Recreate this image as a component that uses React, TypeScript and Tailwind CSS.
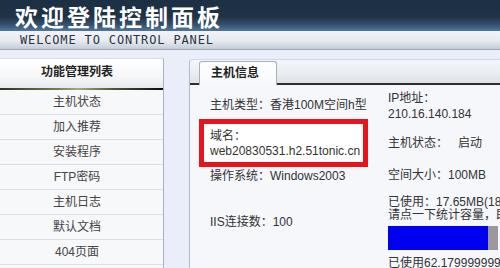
export default function App() {
  const cjk = { fontFamily: '"Liberation Sans", "Noto Sans CJK SC", sans-serif' } as const;
  const items = ["主机状态", "加入推荐", "安装程序", "FTP密码", "主机日志", "默认文档", "404页面"];
  return (
    <div className="w-[500px] h-[268px] overflow-hidden bg-[#e9eef8] text-[12px] text-[#333]" style={cjk}>
      {/* header */}
      <div className="h-[31px] flex items-center pl-[15px] bg-[linear-gradient(to_bottom,#1c2f43_0%,#1f3347_55%,#33536f_80%,#5077a0_100%)]">
        <span className="text-white text-[23px] font-bold tracking-[3px] leading-[28px]" style={{ fontFamily: '"Noto Sans CJK SC", sans-serif' }}>
          欢迎登陆控制面板
        </span>
      </div>
      <div className="h-[19px] flex items-center pl-[20px] border-b border-[#9ea7b3] bg-[linear-gradient(to_bottom,#f1f3f7_0%,#e7eaf0_55%,#c6cdd7_100%)]">
        <span className="text-[12px] text-[#2b3440] tracking-[0.85px] leading-none" style={{ fontFamily: '"DejaVu Sans Mono", monospace' }}>
          WELCOME TO CONTROL PANEL
        </span>
      </div>
      {/* main */}
      <div className="flex items-start">
        {/* sidebar */}
        <div className="mt-[8px] w-[164px] shrink-0 border-r border-t border-r-[#aab3bd] border-t-[#d6dbe2] bg-[#f7f8fa] pb-[10px]">
          <div className="h-[29px] flex items-center justify-center pr-[9px] pb-[3px] font-bold text-[#222] bg-[linear-gradient(to_bottom,#ffffff_0%,#f6f7f9_60%,#e6e9ee_100%)]">
            功能管理列表
          </div>
          <div className="h-[2px] bg-[linear-gradient(to_right,#2b3322_0%,#6f8050_35%,#9fae7a_48%,#4a5535_70%,#0c0c0c_100%)]" />
          {items.map((t) => (
            <div key={t} className="h-[25px] flex items-center justify-center pr-[9px] border-b border-[#dcdfe4] text-[#444]">
              {t}
            </div>
          ))}
        </div>
        {/* panel */}
        <div className="ml-[25px] mt-[9px] flex-1 min-w-0 border-l border-t border-l-[#b2bac4] border-t-[#d3d9e0] rounded-tl-[4px] bg-[#f5f7fb]">
          <div className="h-[25px] flex items-end border-b-2 border-[#2e2e2e] bg-[linear-gradient(to_bottom,#f4f6f9_0%,#e9ecf1_60%,#dde2e9_100%)] rounded-tl-[4px]">
            <div className="ml-[9px] -mb-[2px] w-[78px] h-[24px] flex items-center justify-center pb-[2px] font-bold text-[#222] border border-b-0 border-[#a7afb9] rounded-t-[3px] bg-[linear-gradient(to_bottom,#ffffff_0%,#f7f8fa_100%)]">
              <span className="pr-[6px]">主机信息</span>
            </div>
          </div>
          <div className="flex whitespace-nowrap">
            {/* left column */}
            <div className="w-[198px] shrink-0 pl-[20px] flex flex-col leading-[16px]">
              <div className="mt-[12px]">主机类型：香港100M空间h型</div>
              <div className="mt-[6px] -ml-[11px] w-[169px] border-[5px] border-[#e8141b] bg-white pl-[6px] pt-[5px] pb-[3px] leading-[15px]">
                <div>域名：</div>
                <div>web20830531.h2.51tonic.cn</div>
              </div>
              <div className="mt-[1px]">操作系统：Windows2003</div>
              <div className="mt-[30px]">IIS连接数：100</div>
            </div>
            {/* right column */}
            <div className="flex flex-col leading-[16px]">
              <div className="mt-[5px]">IP地址：</div>
              <div>210.16.140.184</div>
              <div className="mt-[13px] flex">
                <span>主机状态：</span>
                <span className="ml-[10px]">启动</span>
              </div>
              <div className="mt-[16px]">空间大小：100MB</div>
              <div className="mt-[13px] leading-[13px]">
                <div>已使用：17.65MB(18%)</div>
                <div>请点一下统计容量，即时更新</div>
              </div>
              <div className="mt-[4px] w-[110px] h-[24px] flex">
                <div className="w-[100px] h-full bg-[#0000f0]" />
                <div className="flex-1 h-full bg-[#9a9a9a]" />
              </div>
              <div className="mt-[5px]">已使用62.17999999999999%</div>
            </div>
          </div>
        </div>
      </div>
    </div>
  );
}
